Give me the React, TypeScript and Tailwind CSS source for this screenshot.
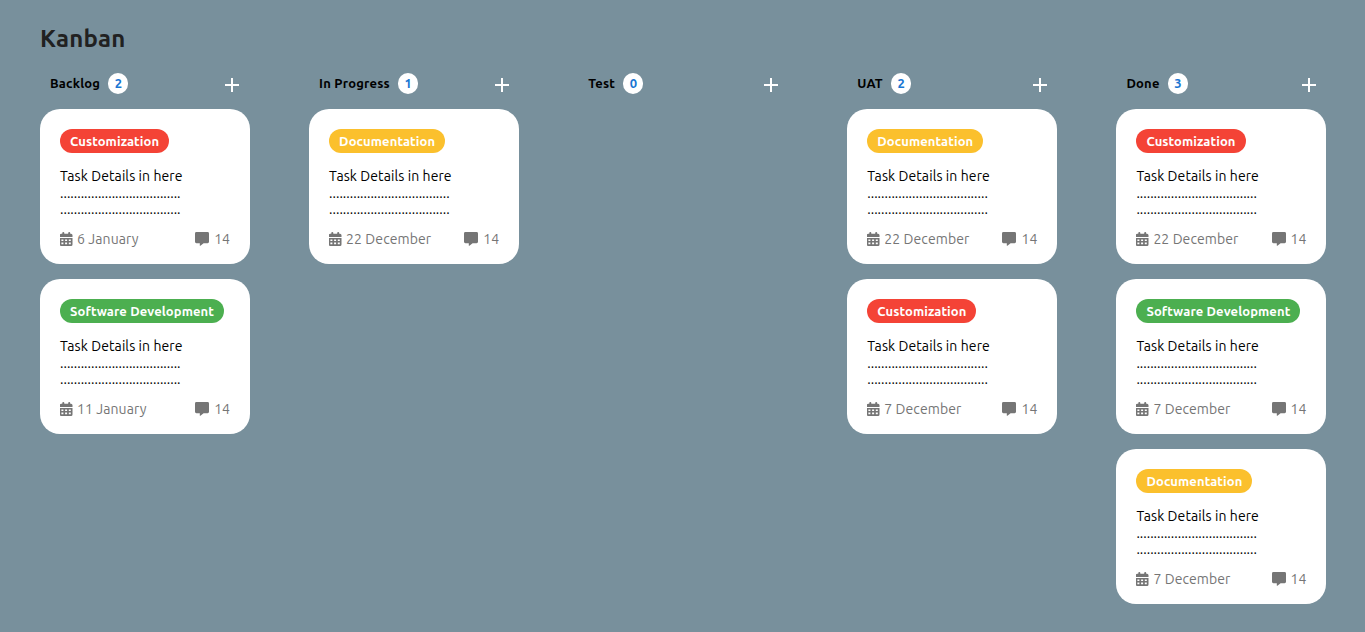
import { MdAdd } from "react-icons/md";

type Tag = "Customization" | "Documentation" | "Software Development";
type Task = { tag: Tag; date: string };

const tagStyles: Record<Tag, string> = {
  Customization: "bg-[#f44336] w-[109.2px]",
  Documentation: "bg-[#fbc02d] w-[116px]",
  "Software Development": "bg-[#4caf50] w-[164px]",
};

const columns: { title: string; tasks: Task[] }[] = [
  { title: "Backlog", tasks: [{ tag: "Customization", date: "6 January" }, { tag: "Software Development", date: "11 January" }] },
  { title: "In Progress", tasks: [{ tag: "Documentation", date: "22 December" }] },
  { title: "Test", tasks: [] },
  { title: "UAT", tasks: [{ tag: "Documentation", date: "22 December" }, { tag: "Customization", date: "7 December" }] },
  {
    title: "Done",
    tasks: [
      { tag: "Customization", date: "22 December" },
      { tag: "Software Development", date: "7 December" },
      { tag: "Documentation", date: "7 December" },
    ],
  },
];

const DOTS = ".".repeat(35);

function CalendarIcon() {
  return (
    <svg className="-ml-[0.5px] h-[14px] w-[13px]" viewBox="0 0 13 14" fill="currentColor">
      <path d="M2.300 1a1 1 0 0 1 2 0v.8h3.900V1a1 1 0 0 1 2 0v.8h.8A1.500 1.500 0 0 1 12.500 3.300v1.700H-.3V3.300A1.500 1.500 0 0 1 1.200 1.800h1.100z" />
      <path
        fillRule="evenodd"
        d="M-.3 6h12.800v6.500a1.500 1.500 0 0 1-1.500 1.500H1.200a1.500 1.500 0 0 1-1.500-1.500zM1.400 7.400v1.600h2V7.400zM5.100 7.400v1.600h2V7.400zM8.800 7.400v1.600h2V7.400zM1.400 10.600v1.600h2v-1.600zM5.100 10.600v1.600h2v-1.600zM8.800 10.600v1.600h2v-1.600z"
      />
    </svg>
  );
}

function CommentIcon() {
  return (
    <svg className="h-[14px] w-[14px]" viewBox="0 0 14 14" fill="currentColor">
      <path d="M1.400 0h11.200A1.400 1.400 0 0 1 14 1.400v8.400a1.400 1.400 0 0 1-1.400 1.400H8.600L5.400 13.700a.35.35 0 0 1-.6-.3V11.200H1.400A1.400 1.400 0 0 1 0 9.800V1.400A1.400 1.400 0 0 1 1.400 0z" />
    </svg>
  );
}

function Card({ task }: { task: Task }) {
  return (
    <article className="flex h-[155px] flex-col rounded-[20px] bg-white px-5 pt-5">
      <span className={`flex h-6 items-center justify-center self-start rounded-full pt-px text-[13px] font-bold tracking-[0.1px] whitespace-nowrap text-white ${tagStyles[task.tag]}`}>
        {task.tag}
      </span>
      <div className="mt-[15px] text-[14px] leading-4 text-black">
        <p className="tracking-[0.09px]">Task Details in here</p>
        <p className="mt-px">{DOTS}</p>
        <p>{DOTS}</p>
      </div>
      <footer className="mt-3 flex h-5 items-center justify-between text-[14px] text-[#757575]">
        <span className="flex items-center gap-[4.5px] tracking-[0.09px]">
          <CalendarIcon />
          {task.date}
        </span>
        <span className="flex items-center gap-[5px]">
          <CommentIcon />
          14
        </span>
      </footer>
    </article>
  );
}

export default function App() {
  return (
    <main className="h-[632px] overflow-hidden bg-[#78909c] px-10 pt-[23px] font-['Ubuntu','Noto_Sans',sans-serif]">
      <h1 className="h-8 text-2xl leading-8 font-semibold tracking-[0.2px] text-[#212121]">Kanban</h1>
      <div className="mt-[17px] flex w-[1286.4px] justify-between">
        {columns.map((column) => (
          <section key={column.title} className="w-[210px]">
            <header className="flex h-[22px] items-center pr-[5.6px] pl-[10px]">
              <h2 className="pt-px text-[13px] font-bold tracking-[0.2px] text-black">{column.title}</h2>
              <span className="ml-[8.3px] flex h-[21px] w-5 items-center justify-center rounded-full bg-white pt-px text-[13px] font-bold text-[#1976d2]">
                {column.tasks.length}
              </span>
              <button className="ml-auto pt-[3px] text-white">
                <MdAdd size={24} />
              </button>
            </header>
            <div className="mt-[15px] flex flex-col gap-[15px]">
              {column.tasks.map((task, i) => (
                <Card key={i} task={task} />
              ))}
            </div>
          </section>
        ))}
      </div>
    </main>
  );
}
